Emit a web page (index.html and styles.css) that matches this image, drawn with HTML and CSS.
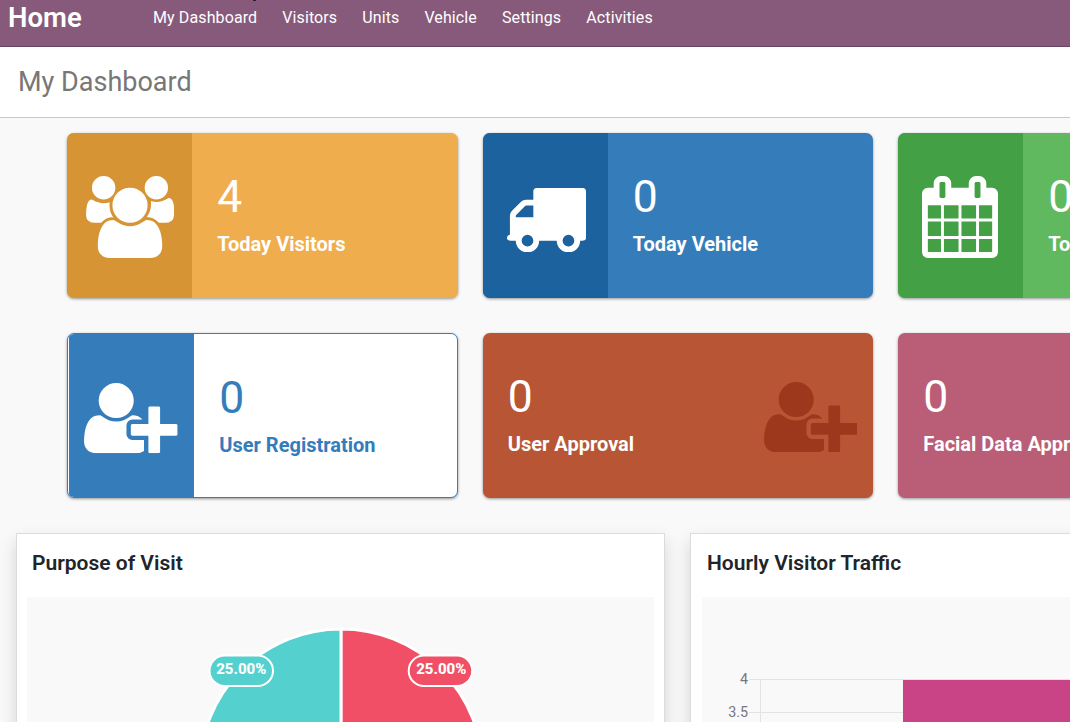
FILE: index.html
```html
<!DOCTYPE html>
<html lang="en">
<head>
<meta charset="utf-8">
<title>My Dashboard</title>
<link rel="stylesheet" href="styles.css">
</head>
<body>
<svg class="sprite" aria-hidden="true">
  <symbol id="users" viewBox="-64 0 1920 1792"><path d="M529 896q-162 5-265 128h-134q-82 0-138-40.5t-56-118.5q0-353 124-353 6 0 43.5 21t97.5 42.5 119 21.5q67 0 133-23-5 37-5 66 0 159 93 286zm1071 637q0 120-73 189.5t-194 69.5h-874q-121 0-194-69.5t-73-189.5q0-53 3.5-103.5t14-109 26.5-108.5 43-97.5 62-81 85.5-53.5 111.5-20q10 0 43 21.5t73 48 107 48 135 21.5 135-21.5 107-48 73-48 43-21.5q61 0 111.5 20t85.5 53.5 62 81 43 97.5 26.5 108.5 14 109 3.5 103.5zm-1024-1277q0 106-75 181t-181 75-181-75-75-181 75-181 181-75 181 75 75 181zm704 384q0 159-112.5 271.5t-271.5 112.5-271.5-112.5-112.5-271.5 112.5-271.5 271.5-112.5 271.5 112.5 112.5 271.5zm576 225q0 78-56 118.5t-138 40.5h-134q-103-123-265-128 93-127 93-286 0-29-5-66 66 23 133 23 59 0 119-21.5t97.5-42.5 43.5-21q124 0 124 353zm-128-609q0 106-75 181t-181 75-181-75-75-181 75-181 181-75 181 75 75 181z"/></symbol>
  <symbol id="truck" viewBox="64 256 1728 1408"><path d="M640 1408q0-52-38-90t-90-38-90 38-38 90 38 90 90 38 90-38 38-90zm-384-512h384v-256h-158q-13 0-22 9l-195 195q-9 9-9 22v30zm1280 512q0-52-38-90t-90-38-90 38-38 90 38 90 90 38 90-38 38-90zm256-1088v1024q0 15-4 26.5t-13.5 18.5-16.5 11.5-23.5 6-22.5 2-25.5 0-22.5-.5q0 106-75 181t-181 75-181-75-75-181h-384q0 106-75 181t-181 75-181-75-75-181h-64q-3 0-22.5.5t-25.5 0-22.5-2-23.5-6-16.5-11.5-13.5-18.5-4-26.5q0-26 19-45t45-19v-320q0-8-.5-35t0-38 2.5-34.5 6.5-37 14-30.5 22.5-30l198-198q19-19 50.5-32t58.5-13h160v-192q0-26 19-45t45-19h1024q26 0 45 19t19 45z"/></symbol>
  <symbol id="calendar" viewBox="64 0 1664 1792"><path d="M192 1664h288v-288h-288v288zm352 0h320v-288h-320v288zm-352-352h288v-320h-288v320zm352 0h320v-320h-320v320zm-352-384h288v-288h-288v288zm736 736h320v-288h-320v288zm-384-736h320v-288h-320v288zm768 736h288v-288h-288v288zm-384-352h320v-320h-320v320zm-352-864v-288q0-13-9.500-22.500t-22.500-9.500h-64q-13 0-22.500 9.500t-9.500 22.500v288q0 13 9.500 22.500t22.500 9.500h64q13 0 22.500-9.500t9.500-22.500zm736 864h288v-320h-288v320zm-384-384h320v-288h-320v288zm384 0h288v-288h-288v288zm32-480v-288q0-13-9.500-22.500t-22.500-9.500h-64q-13 0-22.500 9.500t-9.500 22.500v288q0 13 9.500 22.500t22.500 9.500h64q13 0 22.500-9.500t9.500-22.500zm384-64v1280q0 52-38 90t-90 38h-1408q-52 0-90-38t-38-90v-1280q0-52 38-90t90-38h128v-96q0-66 47-113t113-47h64q66 0 113 47t47 113v96h384v-96q0-66 47-113t113-47h64q66 0 113 47t47 113v96h128q52 0 90 38t38 90z"/></symbol>
  <symbol id="user-plus" viewBox="0 128 2048 1536"><path d="M704 896q-159 0-271.5-112.5t-112.500-271.500 112.500-271.500 271.500-112.500 271.500 112.500 112.500 271.500-112.500 271.500-271.500 112.500zm960 128h352q13 0 22.500 9.500t9.500 22.500v192q0 13-9.500 22.500t-22.500 9.500h-352v352q0 13-9.500 22.500t-22.500 9.500h-192q-13 0-22.500-9.500t-9.500-22.500v-352h-352q-13 0-22.500-9.500t-9.500-22.500v-192q0-13 9.500-22.500t22.500-9.500h352v-352q0-13 9.500-22.500t22.500-9.500h192q13 0 22.500 9.500t9.500 22.500v352zm-736 224q0 52 38 90t90 38h256v238q-68 50-171 50h-874q-121 0-194-69t-73-190q0-53 3.500-103.500t14-109 26.500-108.500 43-97.500 62-81 85.500-53.500 111.500-20q19 0 39 17 79 61 154.500 91.500t164.500 30.500 164.500-30.500 154.500-91.500q20-17 39-17 132 0 217 96h-223q-52 0-90 38t-38 90v192z"/></symbol>
</svg>

<header class="navbar">
  <a class="brand">Home</a>
  <nav class="menu">
    <a>My Dashboard</a><a>Visitors</a><a>Units</a><a>Vehicle</a><a>Settings</a><a>Activities</a>
  </nav>
  <span class="speck"></span>
</header>

<div class="titlebar"><h1>My Dashboard</h1></div>

<main>
  <section class="cards">
    <article class="card orange">
      <div class="pane"><svg width="88" height="82"><use href="#users"/></svg></div>
      <div class="info"><span class="num">4</span><span class="label">Today Visitors</span></div>
    </article>
    <article class="card blue">
      <div class="pane truck"><svg width="79" height="64.400"><use href="#truck"/></svg></div>
      <div class="info"><span class="num">0</span><span class="label">Today Vehicle</span></div>
    </article>
    <article class="card green">
      <div class="pane"><svg width="76" height="82"><use href="#calendar"/></svg></div>
      <div class="info"><span class="num">0</span><span class="label">Today Booking</span></div>
    </article>
    <article class="card outline">
      <div class="pane"><svg width="93.700" height="70.200"><use href="#user-plus"/></svg></div>
      <div class="info"><span class="num">0</span><span class="label">User Registration</span></div>
    </article>
    <article class="card rust">
      <div class="info"><span class="num">0</span><span class="label">User Approval</span></div>
      <svg class="mark" width="93.700" height="70.200"><use href="#user-plus"/></svg>
    </article>
    <article class="card rose">
      <div class="info"><span class="num">0</span><span class="label">Facial Data Approval</span></div>
    </article>
  </section>

  <section class="panels">
    <article class="panel">
      <h2>Purpose of Visit</h2>
      <svg class="chart" width="627" height="360" viewBox="27 597 627 360">
        <g stroke="#fff" stroke-width="3">
          <path fill="#54d0cf" d="M341.200 770.500V629A141.500 141.500 0 0 0 199.700 770.500Z"/>
          <path fill="#f14f66" d="M341.200 770.500V629A141.500 141.500 0 0 1 482.700 770.500Z"/>
        </g>
        <g stroke="#fff" stroke-width="2">
          <rect x="209.500" y="655.500" width="63.500" height="30.500" rx="15.250" fill="#54d0cf"/>
          <rect x="408.700" y="655.500" width="63.500" height="30.500" rx="15.250" fill="#f14f66"/>
        </g>
        <g class="pct"><text x="241.300" y="674">25.00%</text><text x="441.300" y="674">25.00%</text></g>
      </svg>
    </article>
    <article class="panel">
      <h2>Hourly Visitor Traffic</h2>
      <svg class="chart" width="627" height="360" viewBox="702 597 627 360">
        <g fill="#e3e3e3">
          <rect x="749" y="679" width="560" height="1"/>
          <rect x="749" y="712" width="560" height="1"/>
          <rect x="760" y="680" width="1" height="270"/>
        </g>
        <rect x="903" y="680" width="300" height="270" fill="#c94487"/>
        <g class="tick"><text x="748" y="684">4</text><text x="748" y="717">3.5</text></g>
      </svg>
    </article>
  </section>
</main>
</body>
</html>
```
FILE: styles.css
```css
* { box-sizing: border-box; }
body {
  margin: 0;
  height: 722px;
  overflow: hidden;
  background: #f9f9f9;
  font-family: Roboto, "Liberation Sans", sans-serif;
  color: #212529;
}
.sprite { position: absolute; width: 0; height: 0; }

.navbar {
  position: relative;
  display: flex;
  height: 47px;
  background: #875a7b;
  border-bottom: 1px solid #68465f;
  color: #fff;
}
.brand {
  width: 153px;
  padding-left: 8px;
  font-size: 27.500px;
  font-weight: 600;
  line-height: 35px;
}
.menu { display: flex; gap: 25px; font-size: 16px; line-height: 35px; letter-spacing: 0.11px; }
.speck { position: absolute; top: 0; left: 253px; width: 3px; height: 1px; background: #2b1d27; }

.titlebar {
  height: 71px;
  padding-left: 18px;
  background: #fff;
  border-bottom: 1px solid #c8c8c8;
}
.titlebar h1 {
  margin: 0;
  font-size: 27px;
  font-weight: 400;
  line-height: 71px;
  color: #777;
}

.cards {
  display: grid;
  grid-template-columns: repeat(3, 390.500px);
  grid-auto-rows: 165px;
  gap: 35px 25px;
  padding: 15px 0 0 67.300px;
}
.card {
  display: flex;
  align-items: center;
  overflow: hidden;
  border-radius: 7px;
  box-shadow: 0 1px 3px rgba(0, 0, 0, 0.4);
  color: #fff;
}
.pane {
  flex: none;
  display: flex;
  align-items: center;
  justify-content: center;
  width: 125px;
  height: 100%;
  padding-top: 3px;
}
.pane svg, .mark { fill: currentColor; }
.truck { padding: 9px 0 0 3px; }
.green .pane { padding-right: 1px; }
.info { display: flex; flex-direction: column; padding: 0 0 4px 25px; white-space: nowrap; }
.num { font-size: 44.500px; font-weight: 400; line-height: 60px; }
.label { font-size: 20px; font-weight: 700; line-height: 34px; }
.orange { background: #f0ad4e; }
.orange .pane { background: #d69435; }
.blue { background: #357cba; }
.blue .pane { background: #1c629f; }
.green { background: #60b95e; }
.green .pane { background: #44a044; }
.outline { padding-left: 1px; background: #fff; border: 1px solid #357cba; color: #357cba; }
.outline .pane { background: #357cba; color: #fff; padding: 6px 1px 0 0; }
.outline .info { padding-bottom: 2px; }
.rust { justify-content: space-between; padding-right: 16px; background: #b75534; }
.rust .mark { margin-top: 3px; color: #9e381c; }
.rose { background: #b95e76; }

.panels {
  display: grid;
  grid-template-columns: repeat(2, 649px);
  gap: 25px;
  padding: 35px 0 0 16px;
}
.panel {
  padding: 0 10px 10px;
  background: #fff;
  border: 1px solid #dcdcdc;
  box-shadow: 0 8px 16px rgba(0, 0, 0, 0.15);
}
.panel + .panel { padding-left: 11px; }
.panel h2 {
  height: 63px;
  margin: 0;
  padding-left: 5px;
  font-size: 21px;
  font-weight: 600;
  line-height: 58px;
}
.chart { display: block; background: #f9f9f9; }
.pct text { font-size: 15px; font-weight: 800; fill: #fff; text-anchor: middle; }
.tick text { font-size: 14.300px; fill: #77777f; text-anchor: end; }
```
